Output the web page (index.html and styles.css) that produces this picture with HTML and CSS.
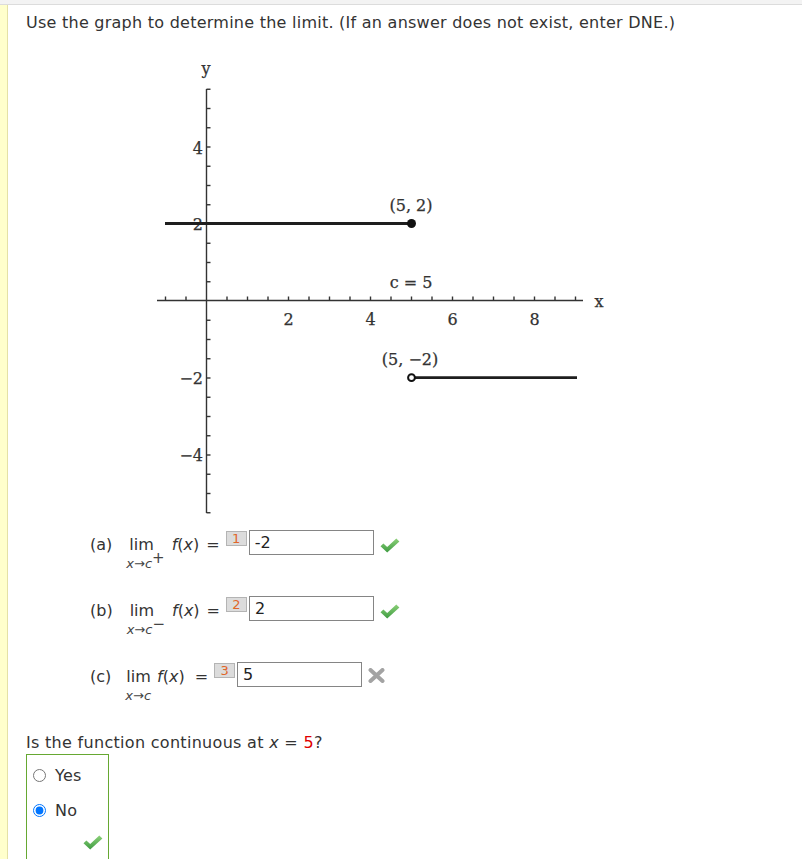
FILE: index.html
```html
<!DOCTYPE html>
<html>
<head>
<meta charset="utf-8">
<link rel="stylesheet" href="styles.css">
</head>
<body>
<div class="topbar"></div>
<div class="wrap">
  <div class="side"></div>
  <div class="content">
    <p class="prompt">Use the graph to determine the limit. (If an answer does not exist, enter DNE.)</p>
    <svg class="graph" viewBox="150 55 460 465" width="460" height="465">
      <g class="axis">
        <line x1="157" y1="300.5" x2="583" y2="300.5"/>
        <line x1="206.5" y1="89" x2="206.5" y2="513"/>
      </g>
      <g class="ticks">
        <line x1="165.5" y1="300.5" x2="165.5" y2="296.5"/>
        <line x1="186" y1="300.5" x2="186" y2="296.5"/>
        <line x1="227" y1="300.5" x2="227" y2="296.5"/>
        <line x1="247.5" y1="300.5" x2="247.5" y2="296.5"/>
        <line x1="268" y1="300.5" x2="268" y2="296.5"/>
        <line x1="288.5" y1="300.5" x2="288.5" y2="296.5"/>
        <line x1="309" y1="300.5" x2="309" y2="296.5"/>
        <line x1="329.5" y1="300.5" x2="329.5" y2="296.5"/>
        <line x1="350" y1="300.5" x2="350" y2="296.5"/>
        <line x1="370.5" y1="300.5" x2="370.5" y2="296.5"/>
        <line x1="391" y1="300.5" x2="391" y2="296.5"/>
        <line x1="411.5" y1="300.5" x2="411.5" y2="296.5"/>
        <line x1="432" y1="300.5" x2="432" y2="296.5"/>
        <line x1="452.5" y1="300.5" x2="452.5" y2="296.5"/>
        <line x1="473" y1="300.5" x2="473" y2="296.5"/>
        <line x1="493.5" y1="300.5" x2="493.5" y2="296.5"/>
        <line x1="514" y1="300.5" x2="514" y2="296.5"/>
        <line x1="534.5" y1="300.5" x2="534.5" y2="296.5"/>
        <line x1="555" y1="300.5" x2="555" y2="296.5"/>
        <line x1="575.5" y1="300.5" x2="575.5" y2="296.5"/>

        <line x1="206.5" y1="89.25" x2="210.5" y2="89.25"/>
        <line x1="206.5" y1="108.5" x2="210.5" y2="108.5"/>
        <line x1="206.5" y1="127.75" x2="210.5" y2="127.75"/>
        <line x1="206.5" y1="147" x2="210.5" y2="147"/>
        <line x1="206.5" y1="166.25" x2="210.5" y2="166.25"/>
        <line x1="206.5" y1="185.5" x2="210.5" y2="185.5"/>
        <line x1="206.5" y1="204.75" x2="210.5" y2="204.75"/>
        <line x1="206.5" y1="224" x2="210.5" y2="224"/>
        <line x1="206.5" y1="243.25" x2="210.5" y2="243.25"/>
        <line x1="206.5" y1="262.5" x2="210.5" y2="262.5"/>
        <line x1="206.5" y1="281.75" x2="210.5" y2="281.75"/>
        <line x1="206.5" y1="320.25" x2="210.5" y2="320.25"/>
        <line x1="206.5" y1="339.5" x2="210.5" y2="339.5"/>
        <line x1="206.5" y1="358.75" x2="210.5" y2="358.75"/>
        <line x1="206.5" y1="378" x2="210.5" y2="378"/>
        <line x1="206.5" y1="397.25" x2="210.5" y2="397.25"/>
        <line x1="206.5" y1="416.5" x2="210.5" y2="416.5"/>
        <line x1="206.5" y1="435.75" x2="210.5" y2="435.75"/>
        <line x1="206.5" y1="455" x2="210.5" y2="455"/>
        <line x1="206.5" y1="474.25" x2="210.5" y2="474.25"/>
        <line x1="206.5" y1="493.5" x2="210.5" y2="493.5"/>
        <line x1="206.5" y1="512.75" x2="210.5" y2="512.75"/>
      </g>
      <g class="lbl">
        <text x="206" y="74" text-anchor="middle">y</text>
        <text x="599" y="307" text-anchor="middle">x</text>
        <text x="288.5" y="325" text-anchor="middle">2</text>
        <text x="370.5" y="325" text-anchor="middle">4</text>
        <text x="452.5" y="325" text-anchor="middle">6</text>
        <text x="534.5" y="325" text-anchor="middle">8</text>
        <text x="203" y="154" text-anchor="end">4</text>
        <text x="203" y="230" text-anchor="end">2</text>
        <text x="203" y="384" text-anchor="end">−2</text>
        <text x="203" y="461" text-anchor="end">−4</text>
        <text x="411" y="211" text-anchor="middle">(5, 2)</text>
        <text x="411" y="288" text-anchor="middle">c = 5</text>
        <text x="410" y="365" text-anchor="middle">(5, −2)</text>
      </g>
      <line class="fn" x1="165" y1="223.5" x2="411" y2="223.5"/>
      <circle cx="411.5" cy="223.5" r="4.5" fill="#111"/>
      <line class="fn" x1="415" y1="377.7" x2="577" y2="377.7"/>
      <circle cx="411.5" cy="377.7" r="3.4" fill="#fff" stroke="#111" stroke-width="2"/>
    </svg>

    <div class="limrow first">
      <span class="txt label">(a)</span>
      <span class="limblk">
        <span class="lim">lim</span>
        <span class="sub"><i>x</i>→<i>c</i><span class="sup">+</span></span>
      </span>
      <span class="txt fx"><i>f</i>(<i>x</i>)</span>
      <span class="txt eq">=</span>
      <span class="num">1</span>
      <span class="ans">-2</span>
      <svg class="check" viewBox="0 0 20 15" width="20" height="15"><use href="#chk"/></svg>
    </div>

    <div class="limrow">
      <span class="txt label">(b)</span>
      <span class="limblk">
        <span class="lim">lim</span>
        <span class="sub"><i>x</i>→<i>c</i><span class="sup">−</span></span>
      </span>
      <span class="txt fx"><i>f</i>(<i>x</i>)</span>
      <span class="txt eq">=</span>
      <span class="num">2</span>
      <span class="ans">2</span>
      <svg class="check" viewBox="0 0 20 15" width="20" height="15"><use href="#chk"/></svg>
    </div>

    <div class="limrow rowc">
      <span class="txt label">(c)</span>
      <span class="limblk">
        <span class="lim">lim</span>
        <span class="sub"><i>x</i>→<i>c</i></span>
      </span>
      <span class="txt fx"><i>f</i>(<i>x</i>)</span>
      <span class="txt eq">=</span>
      <span class="num">3</span>
      <span class="ans">5</span>
      <svg class="cross" viewBox="0 0 17 15" width="17" height="15">
        <path d="M2.5 2 L14.5 13 M14.5 2 L2.5 13" stroke="#a3a3a3" stroke-width="4" stroke-linecap="round"/>
      </svg>
    </div>

    <p class="q2">Is the function continuous at <i>x</i> = <span class="red">5</span>?</p>
    <div class="choices">
      <label class="choice"><input type="radio" name="cont"> Yes</label>
      <label class="choice"><input type="radio" name="cont" checked> No</label>
      <svg class="check boxcheck" viewBox="0 0 20 15" width="20" height="15"><use href="#chk"/></svg>
    </div>
  </div>
</div>

<svg width="0" height="0" class="defs">
  <defs>
    <linearGradient id="g" x1="0" y1="0" x2="0" y2="1">
      <stop offset="0" stop-color="#8bd078"/>
      <stop offset="1" stop-color="#3f9c42"/>
    </linearGradient>
    <path id="chk" d="M0.5 8.2 L3.4 5.4 L7.2 8.9 L16.3 0.6 L19.4 3.5 L7.2 14.4 Z" fill="url(#g)"/>
  </defs>
</svg>
</body>
</html>
```

FILE: styles.css
```css
body {
  margin: 0;
  font-family: "DejaVu Sans", Verdana, sans-serif;
  font-size: 16px;
  color: #333;
  background: #fff;
}
.topbar {
  height: 4px;
  background: #f3f3f3;
  border-bottom: 1px solid #dcdcdc;
}
.wrap {
  display: flex;
  min-height: 854px;
}
.side {
  width: 7px;
  background: #ffffcc;
  border-right: 1px solid #e4e1a6;
}
.content {
  flex: 1;
  padding-left: 18px;
}
.prompt {
  margin: 9px 0 0;
  line-height: 18px;
  letter-spacing: 0.25px;
}
.graph {
  display: block;
  margin: 23px 0 0 124px;
}
.axis line, .ticks line {
  stroke: #333;
  stroke-width: 1.4;
}
.lbl text {
  font-family: "DejaVu Serif", serif;
  font-size: 16px;
  fill: #333;
  stroke: #333;
  stroke-width: 0.25;
}
.fn {
  stroke: #1e1e1e;
  stroke-width: 2.8;
}
.limrow {
  display: flex;
  align-items: flex-start;
  height: 66px;
  margin-left: 64px;
  line-height: 24px;
}
.limrow.first {
  margin-top: 10px;
}
.txt {
  margin-top: 3px;
}
.limblk {
  display: flex;
  flex-direction: column;
  margin-left: 14px;
}
.lim {
  margin-top: 3px;
  margin-left: 3px;
}
.sub {
  font-size: 13px;
  line-height: 13px;
  color: #444;
}
.sup {
  font-size: 15px;
  position: relative;
  top: -5px;
}
.fx {
  margin-left: 7px;
}
.eq {
  margin-left: 7px;
}
.num {
  box-sizing: border-box;
  width: 21px;
  height: 15px;
  margin: 1px 0 0 6px;
  background: #dcdcdc;
  border: 1px solid #b4b4b4;
  color: #e0662a;
  font-size: 13px;
  line-height: 13px;
  text-align: center;
}
.ans {
  box-sizing: border-box;
  width: 125px;
  height: 25px;
  margin-left: 2px;
  border: 1px solid #858585;
  padding-left: 5px;
  line-height: 23px;
  color: #222;
}
.rowc .lim {
  margin-left: 1px;
}
.rowc .fx {
  margin-left: 6px;
}
.rowc .eq {
  margin-left: 10px;
}
.check {
  margin: 8px 0 0 6px;
}
.cross {
  margin: 6px 0 0 6px;
}
.q2 {
  margin: 6px 0 0;
  line-height: 18px;
  letter-spacing: 0.3px;
}
.red {
  color: #e00000;
}
.choices {
  box-sizing: border-box;
  width: 83px;
  margin-top: 2px;
  min-height: 120px;
  border: 1px solid #66a832;
  padding-top: 3px;
}
.choice {
  display: flex;
  align-items: center;
  height: 35px;
  letter-spacing: 0.3px;
}
.choice input {
  margin: 0 9px 0 6px;
  width: 13px;
  height: 13px;
}
.boxcheck {
  display: block;
  margin: 7px 0 0 56px;
}
.defs {
  position: absolute;
}
```
